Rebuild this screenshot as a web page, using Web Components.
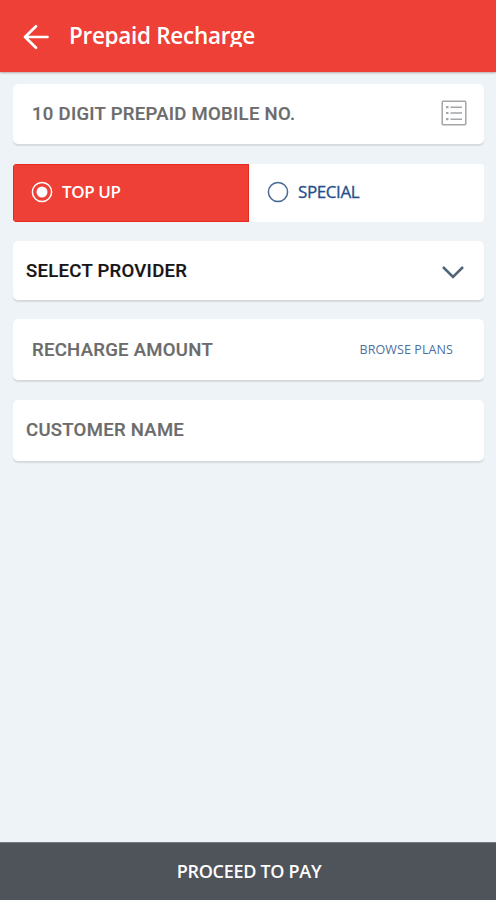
<!DOCTYPE html>
<html lang="en"><head><meta charset="utf-8"><title>Prepaid Recharge</title>
<style>html,body{margin:0;height:100%;overflow:hidden;background:#edf3f7}</style></head>
<body>
<recharge-app></recharge-app>
<script>
class Base extends HTMLElement{
  connectedCallback(){ if(!this.shadowRoot) this.attachShadow({mode:'open'}).innerHTML=this.render(); }
}
customElements.define('app-bar',class extends Base{render(){return `
<style>
:host{display:flex;align-items:center;height:72px;box-sizing:border-box;padding-left:22px;background:#ee4036;color:#fff;box-shadow:0 1px 2px #b9a7ab;flex:none}
svg{width:28px;height:28px;margin-top:2px}
h1{margin:0 0 2px 19px;font:600 22.5px/26px "Open Sans",sans-serif;letter-spacing:-.3px;height:24px;overflow:hidden;white-space:nowrap}
</style>
<svg viewBox="0 0 28 28" fill="none" stroke="#fff" stroke-width="2.7" stroke-linecap="round" stroke-linejoin="round"><path d="M25.5 14H3M14 3.2L3 14L14 24.8"/></svg>
<h1><slot></slot></h1>`}});
customElements.define('field-card',class extends Base{render(){return `
<style>
:host{display:flex;align-items:center;justify-content:space-between;box-sizing:border-box;height:60px;padding:0 13px;background:#fff;border-radius:5px;box-shadow:0 1.5px 1px #d6dadd;font:500 18.5px/24px Roboto,sans-serif;color:#6b6b6b;white-space:nowrap;-webkit-text-stroke:.2px}
:host([inset]){padding-left:19px}
:host([dark]){color:#151515}
span{letter-spacing:.3px}
</style><span><slot></slot></span><slot name="end"></slot>`}});
customElements.define('list-icon',class extends Base{render(){return `
<style>:host{display:block;margin:0 4px 2px 0}svg{display:block}</style>
<svg width="26" height="26" viewBox="0 0 26 26" fill="none" stroke="#a3a6a8"><rect x="1.2" y="1.2" width="23.6" height="23.6" rx="1" stroke-width="1.5"/><path d="M9.5 7.2H21M9.5 13H21M9.5 19.2H21" stroke-width="1.5"/><path d="M5 7.2H7.5M5 13H7.5M5 19.2H7.5" stroke-width="2.2"/></svg>`}});
customElements.define('chevron-icon',class extends Base{render(){return `
<style>:host{display:block;margin:2px 6.5px 0 0}svg{display:block}</style>
<svg width="24" height="16" viewBox="0 0 24 16" fill="none" stroke="#516579" stroke-width="2.6"><path d="M2 3L12 13L22 3"/></svg>`}});
customElements.define('plan-link',class extends Base{render(){return `
<style>:host{display:block;margin-right:18px;font:400 12.5px/16px "Open Sans",sans-serif;color:#4e6e9f;letter-spacing:.1px;-webkit-text-stroke:0}</style><slot></slot>`}});
customElements.define('radio-option',class extends Base{render(){const on=this.hasAttribute('checked');return `
<style>
:host{display:flex;align-items:center;gap:9px;box-sizing:border-box;padding:0 0 2px 18px;color:#234f8c;font:500 17px/22px "Open Sans",sans-serif;-webkit-text-stroke:.3px}
:host([checked]){background:#ee4036;color:#fff;font-weight:600;-webkit-text-stroke:0;box-shadow:inset 0 0 0 1px #e92a20}
span{letter-spacing:-.4px}svg{flex:none}
</style>
<svg width="22" height="22" viewBox="0 0 22 22"><circle cx="11" cy="11" r="9.6" fill="none" stroke="${on?'#fff':'#456894'}" stroke-width="1.5"/>${on?'<circle cx="11" cy="11" r="5.5" fill="#fff"/>':''}</svg><span><slot></slot></span>`}});
customElements.define('radio-strip',class extends Base{render(){return `
<style>:host{display:grid;grid-template-columns:236px 1fr;height:58px;border-radius:4px;overflow:hidden;background:#fff}</style><slot></slot>`}});
customElements.define('pay-button',class extends Base{render(){return `
<style>:host{display:block;flex:none;height:58px;box-sizing:border-box;border-top:1px solid #777b80;background:#4f545a}
button{display:block;width:100%;height:57px;border:0;padding:0 0 1px 2px;background:none;color:#fff;font:600 18px/24px "Open Sans",sans-serif;letter-spacing:-.3px}</style><button><slot></slot></button>`}});
customElements.define('recharge-app',class extends Base{render(){return `
<style>
:host{display:flex;flex-direction:column;height:900px}
main{flex:1;display:flex;flex-direction:column;padding:12px 12px 0 13px}
.a{margin-bottom:20px}.b{margin-bottom:19px}.c{height:59px;margin-bottom:19px}.d{height:61px;margin-bottom:20px}.e{height:61px;padding-bottom:1px}
</style>
<app-bar>Prepaid Recharge</app-bar>
<main>
<field-card class="a" inset>10 DIGIT PREPAID MOBILE NO.<list-icon slot="end"></list-icon></field-card>
<radio-strip class="b"><radio-option checked>TOP UP</radio-option><radio-option>SPECIAL</radio-option></radio-strip>
<field-card class="c" dark>SELECT PROVIDER<chevron-icon slot="end"></chevron-icon></field-card>
<field-card class="d" inset>RECHARGE AMOUNT<plan-link slot="end">BROWSE PLANS</plan-link></field-card>
<field-card class="e">CUSTOMER NAME</field-card>
</main>
<pay-button>PROCEED TO PAY</pay-button>`}});
</script>
</body></html>
